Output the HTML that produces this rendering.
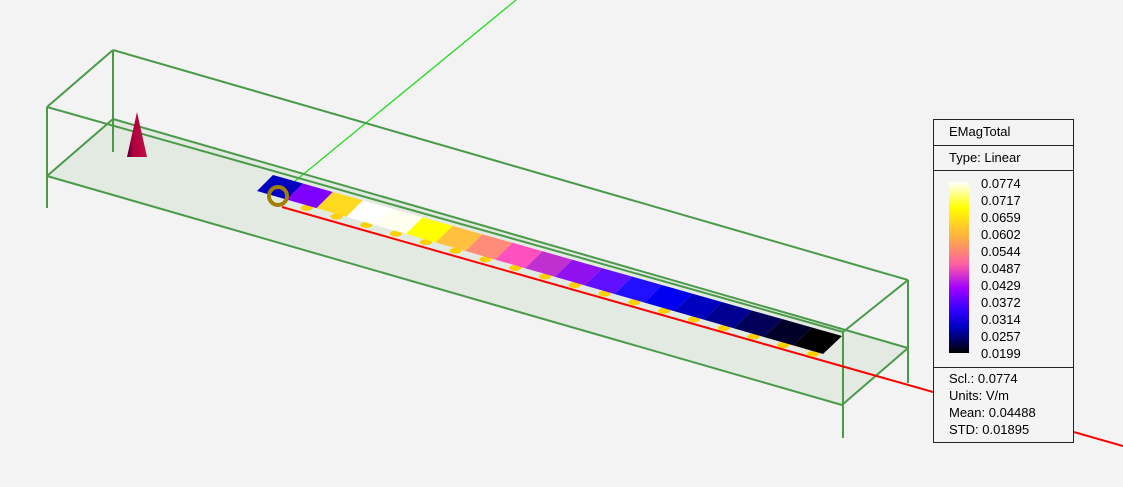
<!DOCTYPE html>
<html><head><style>
body{margin:0;width:1123px;height:487px;background:#f3f3f3;overflow:hidden;position:relative;font-family:"Liberation Sans",sans-serif;}
#leg{position:absolute;left:933px;top:119px;width:139px;height:322px;border:1px solid #222;background:#f4f4f4;font-size:13px;color:#000;}
.row{border-bottom:1px solid #222;}
#cb{position:absolute;left:15px;top:62px;width:20px;height:171px;background:linear-gradient(to bottom,#fff 0%,#ffff00 15%,#ffb040 32%,#ff60a0 48%,#a000ff 62%,#3000ff 75%,#0000c0 85%,#000000 100%);}
.lab{position:absolute;left:47px;line-height:17px;}
</style></head><body>
<svg width="1123" height="487" style="position:absolute;left:0;top:0">
<defs><linearGradient id="cone" x1="0" x2="1"><stop offset="0" stop-color="#400030"/><stop offset="0.3" stop-color="#b0003c"/><stop offset="1" stop-color="#c0104a"/></linearGradient></defs>
<polygon points="47,176 113,119 908,348 842,405" fill="#e3eae2"/>
<line x1="278" y1="195" x2="516" y2="0" stroke="#22dd22" stroke-width="1.3"/>
<g stroke="#4a9a4a" stroke-width="2" fill="none">
<line x1="113" y1="50" x2="908" y2="280"/>
<line x1="47" y1="107" x2="843" y2="332"/>
<line x1="113" y1="119" x2="908" y2="348"/>
<line x1="47" y1="176" x2="842" y2="405"/>
<line x1="47" y1="107" x2="113" y2="50"/>
<line x1="843" y1="332" x2="908" y2="280"/>
<line x1="47" y1="176" x2="113" y2="119"/>
<line x1="842" y1="405" x2="908" y2="348"/>
<line x1="47" y1="107" x2="47" y2="208"/>
<line x1="113" y1="50" x2="113" y2="152"/>
<line x1="843" y1="332" x2="843" y2="438"/>
<line x1="908" y1="280" x2="908" y2="383"/>
</g>
<line x1="282" y1="207" x2="1123" y2="446" stroke="#ff0000" stroke-width="2"/>
<g id="strip"></g>
<circle cx="278" cy="196" r="9" fill="none" stroke="#a08000" stroke-width="4"/>
<polygon points="137,112 127,157 147,157" fill="url(#cone)"/>
</svg>
<script>
var cols=["#0000c0","#8000ff","#ffd820","#ffffff","#fffff0","#ffff00","#ffc040","#ff8c78","#ff50c0","#c030d0","#9010f0","#6010ff","#2010ff","#0000f0","#0000c0","#000090","#000058","#000028","#000000"];
var g=document.getElementById("strip"),n=cols.length,s="";
var A=[273,175],B=[257,191],C=[823,354],D=[842,336];
function lp(p,q,t){return [p[0]+(q[0]-p[0])*t,p[1]+(q[1]-p[1])*t];}
for(var i=0;i<n;i++){var t0=i/n,t1=(i+1)/n;
var a=lp(A,D,t0),b=lp(B,C,t0),c=lp(B,C,t1),d=lp(A,D,t1);
var m=lp(b,c,0.5);
if(i>0)s+='<ellipse cx="'+(m[0]+5)+'" cy="'+(m[1]+4)+'" rx="6" ry="3" fill="#ffd000"/>';
s+='<polygon points="'+a+' '+b+' '+c+' '+d+'" fill="'+cols[i]+'"/>';}
g.innerHTML=s;
</script>
<div id="leg">
<div class="row" style="height:25px;line-height:23px;padding-left:15px">EMagTotal</div>
<div class="row" style="height:24px;line-height:24px;padding-left:15px">Type: Linear</div>
<div id="cb"></div>
<div class="lab" style="top:55px">0.0774</div>
<div class="lab" style="top:72px">0.0717</div>
<div class="lab" style="top:89px">0.0659</div>
<div class="lab" style="top:106px">0.0602</div>
<div class="lab" style="top:123px">0.0544</div>
<div class="lab" style="top:140px">0.0487</div>
<div class="lab" style="top:157px">0.0429</div>
<div class="lab" style="top:174px">0.0372</div>
<div class="lab" style="top:191px">0.0314</div>
<div class="lab" style="top:208px">0.0257</div>
<div class="lab" style="top:225px">0.0199</div>
<div style="position:absolute;left:0;top:247px;width:139px;border-top:1px solid #222"></div>
<div style="position:absolute;left:15px;top:250px;line-height:17px">Scl.: 0.0774<br>Units: V/m<br>Mean: 0.04488<br>STD: 0.01895</div>
</div>
</body></html>
